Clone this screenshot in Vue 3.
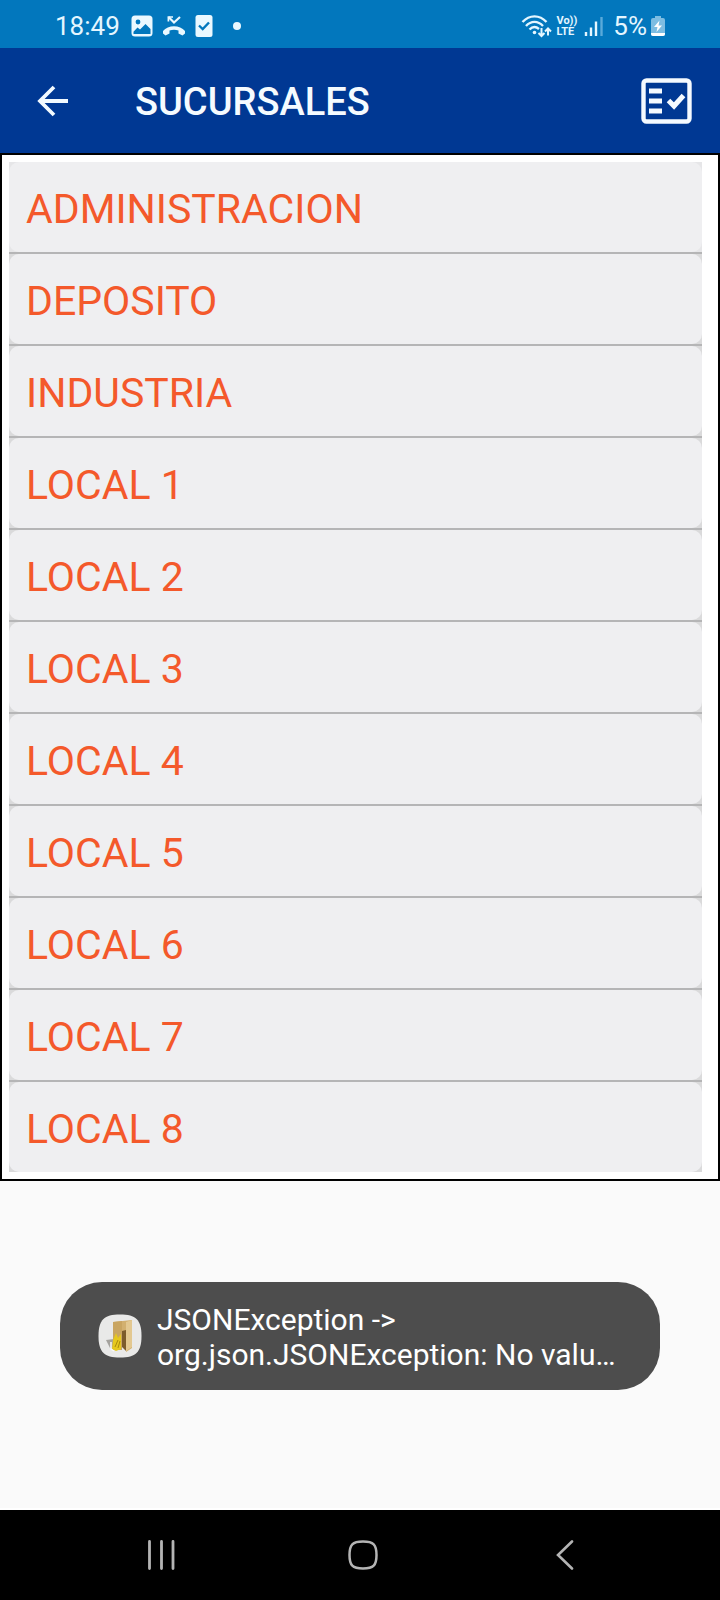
<script setup>
const branches = [
  'ADMINISTRACION',
  'DEPOSITO',
  'INDUSTRIA',
  'LOCAL 1',
  'LOCAL 2',
  'LOCAL 3',
  'LOCAL 4',
  'LOCAL 5',
  'LOCAL 6',
  'LOCAL 7',
  'LOCAL 8',
]
</script>

<template>
  <div class="screen">
    <div class="status">
      <div class="status-left">
        <span class="clock">18:49</span>
        <svg width="22" height="22" viewBox="0 0 22 22" aria-hidden="true">
          <rect x="0.5" y="0.5" width="21" height="21" rx="3.5" fill="#eaf8ff" />
          <circle cx="7" cy="7" r="2.4" fill="#0277bd" />
          <path d="M2.5 16.8 L6.5 12.5 L9 14.5 L14.5 9 L19.5 14 V19 H2.5 Z" fill="#0277bd" />
        </svg>
        <svg width="24" height="22" viewBox="0 0 24 22" aria-hidden="true">
          <path d="M6.5 2 L12 7.5 L18 2" fill="none" stroke="#eaf8ff" stroke-width="2.2" />
          <path d="M6.4 6.5 V2 H11" fill="none" stroke="#eaf8ff" stroke-width="1.7" />
          <path d="M1 16 C6 9.5 18 9.5 23 16 V18.5 L20.5 20.5 L16.5 18.5 V15.5 C13.5 14.4 10.5 14.4 7.5 15.5 V18.5 L3.5 20.5 L1 18.5 Z" fill="#eaf8ff" />
        </svg>
        <svg width="18" height="22" viewBox="0 0 18 22" aria-hidden="true">
          <rect x="0.5" y="0" width="17" height="22" rx="2.5" fill="#eaf8ff" />
          <path d="M4 10.5 L7.7 14 L14 7.5" fill="none" stroke="#0277bd" stroke-width="2.4" />
        </svg>
        <span class="dot"></span>
      </div>
      <div class="status-right">
        <svg width="31" height="24" viewBox="0 0 31 24" aria-hidden="true">
          <g fill="none" stroke="#e4f6ff" stroke-width="2.4">
            <path d="M1.5 8 C8.5 0.5 18.5 0.5 25.5 8" />
            <path d="M5 12 C10 6.5 17 6.5 22 12" />
            <path d="M8.5 15.5 C11.5 12.5 15 12.5 18 15" />
          </g>
          <circle cx="13.5" cy="18.5" r="1.8" fill="#e4f6ff" />
          <path d="M20.5 14 V22 M17.5 19 L20.5 22 L23.5 19 M27 21.5 V14.5 M24 17.5 L27 14.5 L30 17.5" fill="none" stroke="#e4f6ff" stroke-width="2" />
        </svg>
        <span class="volte"><span>Vo))</span><span>LTE</span></span>
        <svg width="19" height="20" viewBox="0 0 19 20" aria-hidden="true">
          <path d="M2 20 V16 M7 20 V11.5 M12 20 V5.5" stroke="#e4f6ff" stroke-width="2.4" />
          <path d="M17.5 20 V1" stroke="#5aaada" stroke-width="2.4" />
        </svg>
        <span class="percent">5%</span>
        <svg width="14" height="20" viewBox="0 0 14 20" aria-hidden="true">
          <path d="M4 0 H10 V2 H12 Q14 2 14 4 V18 Q14 20 12 20 H2 Q0 20 0 18 V4 Q0 2 2 2 H4 Z" fill="#7dbde2" />
          <path d="M0 17 H14 V18 Q14 20 12 20 H2 Q0 20 0 18 Z" fill="#fff" />
          <path d="M8.5 4.5 L3 11 H6.5 L5.5 16 L11 9.5 H7.5 Z" fill="#fff" />
        </svg>
      </div>
    </div>

    <header class="bar">
      <button type="button" aria-label="Volver">
        <svg width="32" height="32" viewBox="0 0 32 32">
          <path d="M31 16 H3 M17 2 L3 16 L17 30" fill="none" stroke="#f2faff" stroke-width="3.8" />
        </svg>
      </button>
      <h1>SUCURSALES</h1>
      <button type="button" aria-label="Lista de tareas">
        <svg width="51" height="46" viewBox="0 0 51 46">
          <rect x="2.5" y="2.5" width="46" height="41" rx="3" fill="none" stroke="#f5faff" stroke-width="4.4" />
          <path d="M8 13 H21 M8 23 H21 M8 33 H21" stroke="#f5faff" stroke-width="5" />
          <path d="M27.5 22.5 L33 28 L42.5 17.5" fill="none" stroke="#f5faff" stroke-width="5" />
        </svg>
      </button>
    </header>

    <main>
      <ul class="list">
        <li v-for="name in branches" :key="name">
          <button class="row" type="button">{{ name }}</button>
        </li>
      </ul>

      <div class="toast" role="status">
        <svg width="44" height="44" viewBox="0 0 44 44" aria-hidden="true">
          <path d="M22 0.5 C38 0.5 43.5 6 43.5 22 S38 43.5 22 43.5 S0.5 38 0.5 22 S6 0.5 22 0.5 Z" fill="#e9e9e8" />
          <path d="M8 26 L16 25 V36 L12 34 Z" fill="#a5a39e" />
          <path d="M15 8 L34 6 V34 L28 38 V18 L24 17 V36 L15 36 Z" fill="#d2b06f" />
          <path d="M15 8 L24 7 V36 L15 36 Z" fill="#c9a561" />
          <path d="M28 8 L34 6 V33 L28 37 Z" fill="#e3c890" />
          <path d="M24 17 L28 16 V37 L24 33 Z" fill="#7d5c2b" />
          <path d="M15 26 L18 19 L20 24 L23 20 V35 L18 37 L14 35 Z" fill="#e6c81d" />
          <path d="M17 33 L20 26 M20 34 L22 27" stroke="#a98b0d" stroke-width="1" />
          <path d="M13 28 V35 L16 37" fill="none" stroke="#fafafa" stroke-width="1.5" />
        </svg>
        <p>JSONException -&gt;<br />org.json.JSONException: No valu…</p>
      </div>
    </main>

    <nav class="keys" aria-label="Sistema">
      <button type="button" aria-label="Recientes">
        <svg width="28" height="30" viewBox="0 0 28 30">
          <path d="M2.5 1.5 V28.5 M14.5 1.5 V28.5 M26 1.5 V28.5" stroke="#b4b4b4" stroke-width="2.8" stroke-linecap="round" />
        </svg>
      </button>
      <button type="button" aria-label="Inicio">
        <svg width="30" height="30" viewBox="0 0 30 30">
          <path d="M15 1.5 C25.5 1.5 28.5 4.5 28.5 15 S25.5 28.5 15 28.5 S1.5 25.5 1.5 15 S4.5 1.5 15 1.5 Z" fill="none" stroke="#b4b4b4" stroke-width="2.5" />
        </svg>
      </button>
      <button type="button" aria-label="Atrás">
        <svg width="18" height="30" viewBox="0 0 18 30">
          <path d="M16 1.5 L2 15 L16 28.5" fill="none" stroke="#b4b4b4" stroke-width="2.6" stroke-linecap="round" />
        </svg>
      </button>
    </nav>
  </div>
</template>

<style>
body {
  margin: 0;
  background: #fafafa;
}
</style>

<style scoped>
.screen {
  display: flex;
  flex-direction: column;
  min-height: 100vh;
  background: #fafafa;
  font-family: Roboto, "Liberation Sans", sans-serif;
}

svg {
  display: block;
  flex: none;
}

button {
  font: inherit;
  border: 0;
  padding: 0;
  background: none;
  cursor: pointer;
}

.status {
  display: flex;
  justify-content: space-between;
  height: 48px;
  padding: 4px 55px 0;
  box-sizing: border-box;
  background: #0277bd;
  color: #e4f6ff;
}

.status-left,
.status-right {
  display: flex;
  align-items: center;
}

.status-left {
  gap: 9px;
}

.clock,
.percent {
  font-size: 26px;
  line-height: 32px;
}

.clock {
  margin-right: 2px;
}

.dot {
  width: 8px;
  height: 8px;
  margin-left: 11px;
  border-radius: 50%;
  background: #eaf8ff;
}

.volte {
  display: flex;
  flex-direction: column;
  margin: 0 7px 0 4px;
  font-size: 11px;
  font-weight: 700;
  line-height: 11px;
}

.percent {
  margin: 0 4px 0 10px;
}

.bar {
  display: flex;
  align-items: center;
  height: 105px;
  padding: 0 28px 0 37px;
  box-sizing: border-box;
  background: #003893;
}

.bar h1 {
  flex: 1;
  margin: 0 0 0 66px;
  padding-top: 3px;
  color: #f5fbff;
  font-size: 38px;
  font-weight: 500;
  line-height: 44px;
}

main {
  flex: 1;
}

.list {
  display: flex;
  flex-direction: column;
  gap: 2px;
  margin: 0;
  padding: 7px 16px 7px 7px;
  border: 2px solid #000;
  background: #fff;
  list-style: none;
}

.list li {
  background: #dadadb;
}

.list li:first-child {
  background: #e6e6e8;
}

.list li + li {
  box-shadow: 0 -2px 0 #b5b5b6;
}

.row {
  display: block;
  width: 100%;
  padding: 23px 17px 19px;
  border-radius: 10px;
  background: #efeff1;
  color: #f4592b;
  font-size: 41px;
  line-height: 48px;
  text-align: left;
}

.toast {
  display: flex;
  align-items: center;
  gap: 15px;
  margin: 101px 60px 0;
  padding: 18px 38px;
  border-radius: 42px;
  background: #4d4d4d;
  color: #fff;
}

.toast p {
  margin: 0;
  padding-top: 2px;
  font-size: 30px;
  line-height: 35px;
}

.keys {
  display: flex;
  justify-content: space-between;
  height: 92px;
  padding: 0 105px 1px 111px;
  box-sizing: border-box;
  border-top: 2px solid #fff;
  background: #000;
}

.keys button {
  display: flex;
  align-items: center;
  justify-content: center;
  width: 100px;
}
</style>
